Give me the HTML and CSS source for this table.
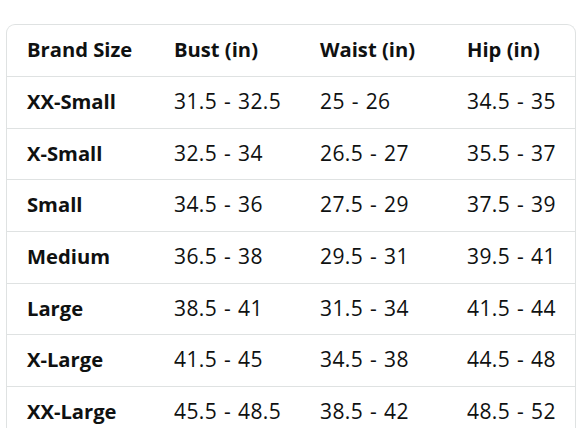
FILE: index.html
```html
<!DOCTYPE html>
<html>
<head>
<meta charset="utf-8">
<link rel="stylesheet" href="styles.css">
</head>
<body>
<div class="wrap">
<table class="chart">
<colgroup><col class="c1"><col class="c2"><col class="c3"><col class="c4"></colgroup>
<thead>
<tr><th>Brand Size</th><th>Bust (in)</th><th>Waist (in)</th><th>Hip (in)</th></tr>
</thead>
<tbody>
<tr><th>XX-Small</th><td>31.5 - 32.5</td><td>25 - 26</td><td>34.5 - 35</td></tr>
<tr><th>X-Small</th><td>32.5 - 34</td><td>26.5 - 27</td><td>35.5 - 37</td></tr>
<tr><th>Small</th><td>34.5 - 36</td><td>27.5 - 29</td><td>37.5 - 39</td></tr>
<tr><th>Medium</th><td>36.5 - 38</td><td>29.5 - 31</td><td>39.5 - 41</td></tr>
<tr><th>Large</th><td>38.5 - 41</td><td>31.5 - 34</td><td>41.5 - 44</td></tr>
<tr><th>X-Large</th><td>41.5 - 45</td><td>34.5 - 38</td><td>44.5 - 48</td></tr>
<tr><th>XX-Large</th><td>45.5 - 48.5</td><td>38.5 - 42</td><td>48.5 - 52</td></tr>
</tbody>
</table>
</div>
</body>
</html>
```
FILE: styles.css
```css
html, body {
  margin: 0;
  padding: 0;
  background: #ffffff;
}
body {
  padding: 24px 0 0 6px;
  font-family: "Open Sans", "Liberation Sans", sans-serif;
  color: #0f1111;
}
.wrap {
  width: 568px;
  height: 403px;
  overflow: hidden;
  border: 1px solid #dfe2e2;
  border-bottom: none;
  border-radius: 9px 9px 0 0;
}
.chart {
  border-collapse: collapse;
  table-layout: fixed;
  width: 568px;
}
.c1 { width: 147px; }
.c2 { width: 146px; }
.c3 { width: 147px; }
.c4 { width: 128px; }
.chart th, .chart td {
  text-align: left;
  padding: 0 0 3px 20px;
  height: 48px;
  white-space: nowrap;
  vertical-align: middle;
}
.chart th {
  font-weight: 700;
  font-size: 20.2px;
}
.chart td {
  font-weight: 400;
  font-size: 21px;
  letter-spacing: 0.4px;
  word-spacing: 1px;
}
.chart tbody tr { border-top: 1px solid #dfe2e2; }
.chart tbody th, .chart tbody td { height: 47.7px; }
```
